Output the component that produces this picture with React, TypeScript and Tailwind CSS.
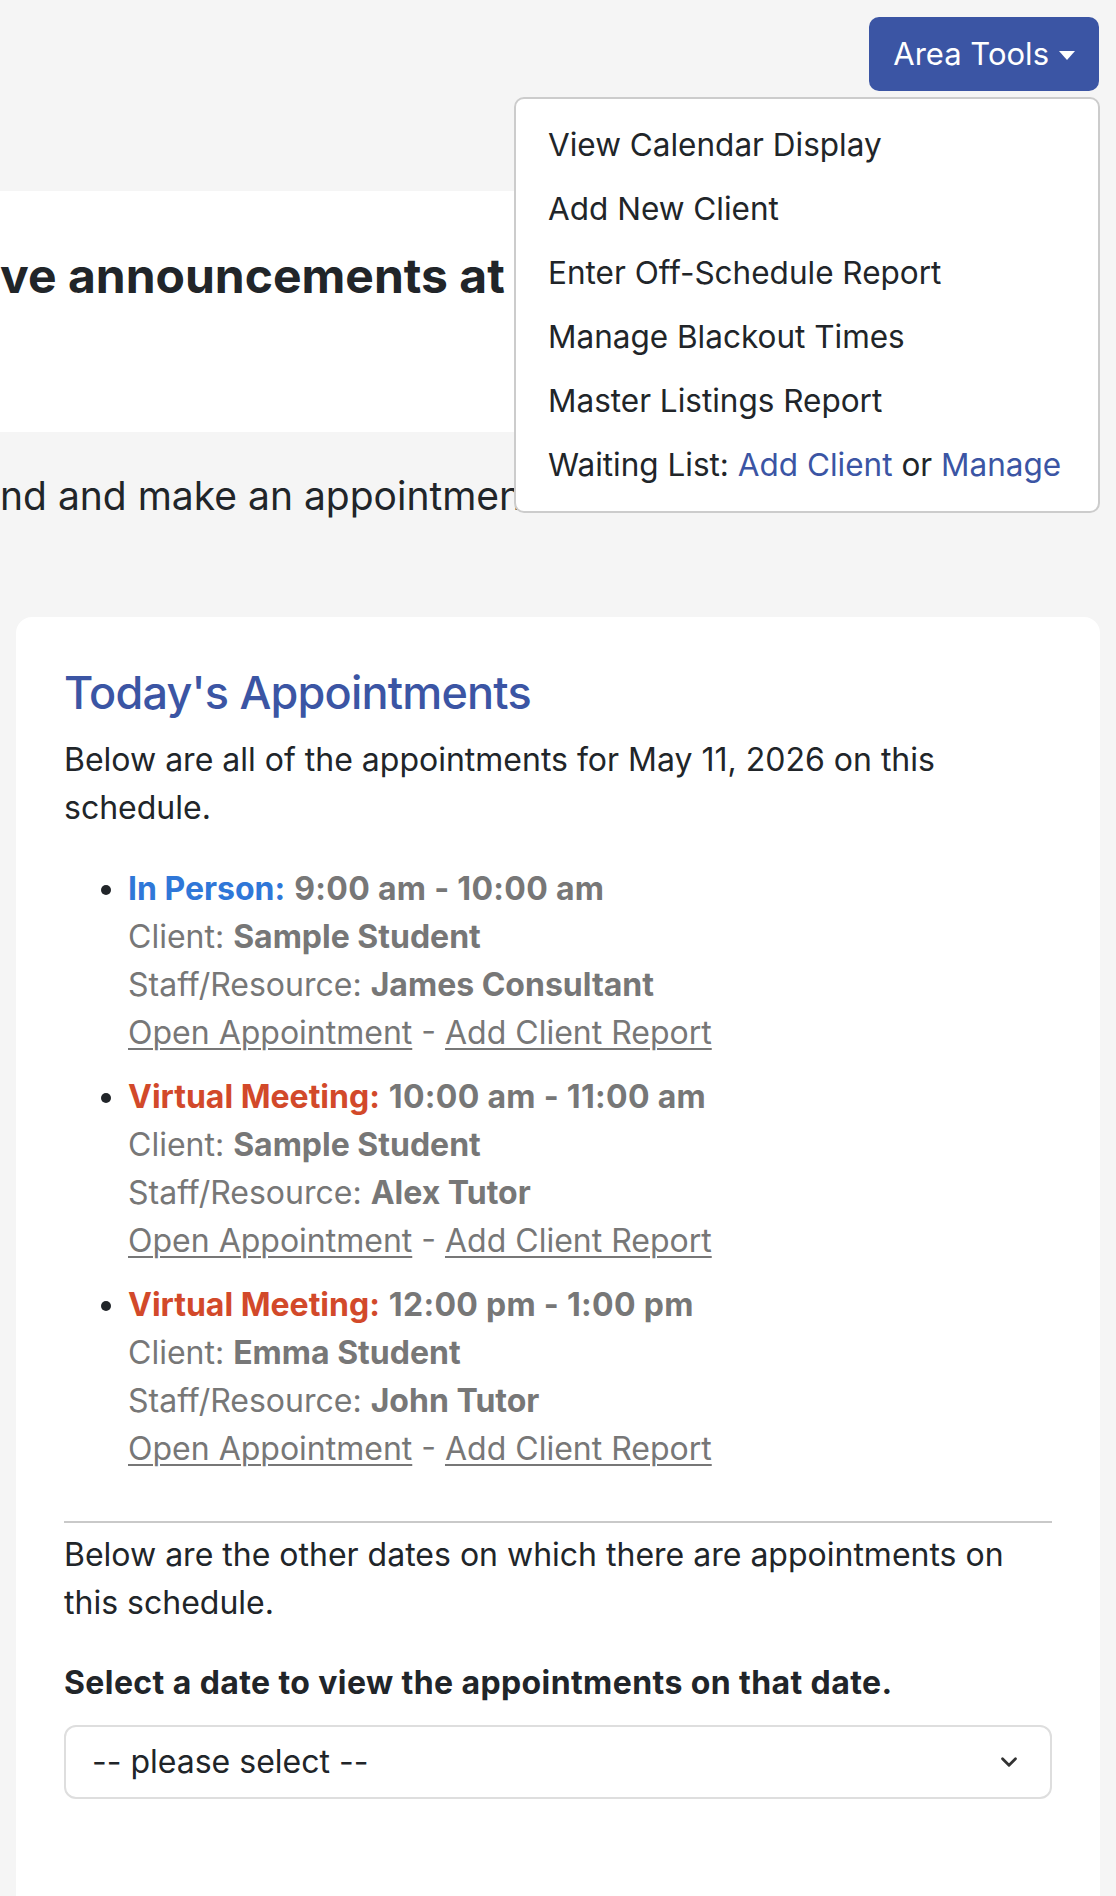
import { ChevronDown } from "lucide-react";

const appointments = [
  {
    kind: "In Person:",
    kindClass: "text-[#2f77d8]",
    time: "9:00 am - 10:00 am",
    client: "Sample Student",
    staff: "James Consultant",
  },
  {
    kind: "Virtual Meeting:",
    kindClass: "text-[#d2492a]",
    time: "10:00 am - 11:00 am",
    client: "Sample Student",
    staff: "Alex Tutor",
  },
  {
    kind: "Virtual Meeting:",
    kindClass: "text-[#d2492a]",
    time: "12:00 pm - 1:00 pm",
    client: "Emma Student",
    staff: "John Tutor",
  },
];

const menuItems = [
  "View Calendar Display",
  "Add New Client",
  "Enter Off-Schedule Report",
  "Manage Blackout Times",
  "Master Listings Report",
];

export default function App() {
  return (
    <div className="relative h-[1896px] overflow-hidden bg-[#f5f5f5] font-['Inter',sans-serif] text-[32px] leading-[48px] text-[#212529]">
      {/* top bar */}
      <div className="flex justify-end pt-[17px] pr-[17px]">
        <button className="flex h-[74px] items-center gap-[10px] rounded-[10px] bg-[#3b55a4] px-[24px] text-[31px] text-white">
          Area Tools
          <span className="mt-[2px] h-0 w-0 border-x-[8px] border-t-[9px] border-x-transparent border-t-white" />
        </button>
      </div>

      {/* announcements strip, mostly hidden under the menu */}
      <div className="mt-[100px] h-[241px] w-[900px] bg-white pt-[56px]">
        <h2 className="whitespace-nowrap text-[48px] font-bold leading-[58px] text-[#212529]">
          ve announcements at
        </h2>
      </div>
      <p className="mt-[40px] whitespace-nowrap text-[39px] leading-[48px]">
        nd and make an appointment
      </p>

      {/* today's appointments card */}
      <div className="mx-[16px] mt-[97px] min-h-[1400px] rounded-[16px] bg-white px-[48px] pt-[48px]">
        <h3 className="text-[45px] font-medium leading-[55px] tracking-[-0.8px] text-[#3b55a4]">
          Today's Appointments
        </h3>
        <p className="mt-[16px]">
          Below are all of the appointments for May 11, 2026 on this schedule.
        </p>
        <ul className="mt-[33px] list-disc pl-[64px] marker:text-[#212529]">
          {appointments.map((a, i) => (
            <li key={i} className="mb-[16px] text-[#777777]">
              <span className={`font-bold ${a.kindClass}`}>{a.kind}</span>{" "}
              <span className="font-bold tracking-[0.3px]">{a.time}</span>
              <br />
              Client: <span className="font-bold">{a.client}</span>
              <br />
              Staff/Resource: <span className="font-bold">{a.staff}</span>
              <br />
              <a className="underline decoration-[2px] underline-offset-[4px]">Open Appointment</a>
              {" - "}
              <a className="underline decoration-[2px] underline-offset-[4px]">Add Client Report</a>
            </li>
          ))}
        </ul>
        <hr className="mt-[48px] border-t-[2px] border-[#c9c9c9]" />
        <p className="mt-[8px]">
          Below are the other dates on which there are appointments on this schedule.
        </p>
        <p className="mt-[32px] font-bold tracking-[0.4px]">
          Select a date to view the appointments on that date.
        </p>
        <div className="mt-[18px] flex h-[74px] items-center justify-between rounded-[12px] border-[2px] border-[#dedede] pl-[26px] pr-[28px]">
          <span>-- please select --</span>
          <ChevronDown className="h-[26px] w-[26px] text-[#333]" strokeWidth={2.6} />
        </div>
      </div>

      {/* area tools dropdown */}
      <div className="absolute left-[514px] top-[97px] w-[586px] rounded-[10px] border-[2px] border-[#cccccc] bg-white py-[14px]">
        {menuItems.map((item) => (
          <div key={item} className="whitespace-nowrap px-[32px] py-[8px] text-[31.5px]">
            {item}
          </div>
        ))}
        <div className="whitespace-nowrap px-[32px] py-[8px] text-[31.5px]">
          Waiting List: <a className="text-[#3b55a4]">Add Client</a> or{" "}
          <a className="text-[#3b55a4]">Manage</a>
        </div>
      </div>
    </div>
  );
}
